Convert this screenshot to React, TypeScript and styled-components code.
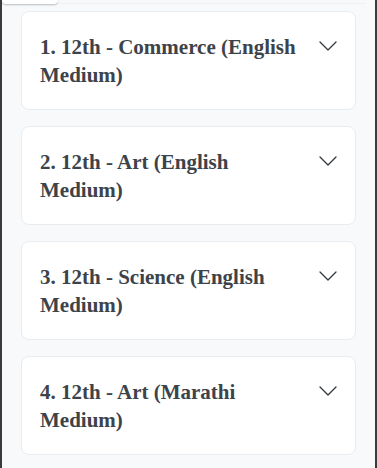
import styled, {createGlobalStyle} from "styled-components";

const GlobalStyle = createGlobalStyle`
    html, body {
        margin: 0;
        padding: 0;
        background: #f8f9fa;
    }
    * {
        box-sizing: border-box;
    }
`;

const Frame = styled.div`
    height: 468px;
    background-color: #f8f9fa;
    border-left: 2px solid #3b3b3b;
    border-right: 2px solid #3b3b3b;
    overflow: hidden;
`;

const TopStrip = styled.div`
    display: flex;
    align-items: flex-end;
    height: 4px;
`;

const Tab = styled.div`
    width: 56px;
    height: 4px;
    background: #ffffff;
    border-radius: 0 0 6px 6px;
    box-shadow: 0 1px 2px rgba(0, 0, 0, 0.25);
`;

const Rule = styled.div`
    flex: 1;
    height: 1px;
    margin-right: 9px;
    background: #eef0f2;
`;

const List = styled.div`
    display: flex;
    flex-direction: column;
    gap: 16px;
    padding: 7px 19px 0 19px;
`;

const Card = styled.div`
    display: flex;
    justify-content: space-between;
    align-items: flex-start;
    height: 99px;
    padding: 21px 18px 20px 18px;
    background: #ffffff;
    border: 1px solid #e9ecef;
    border-radius: 8px;
`;

const Title = styled.div`
    width: 270px;
    font-family: "Liberation Serif", "DejaVu Serif", serif;
    font-size: 21px;
    font-weight: 700;
    line-height: 28px;
    color: #3d434a;
`;

const Chevron = styled.svg`
    flex: none;
    margin-top: 8px;
    width: 18px;
    height: 10px;
`;

const ChevronIcon = () => (<Chevron viewBox={'0 0 18 10'} fill={'none'}>
    <polyline points={'1,1 9,9 17,1'} stroke={'#343a40'} strokeWidth={1.3}
              strokeLinecap={'round'} strokeLinejoin={'round'}/>
</Chevron>)

const courses = [
    '1. 12th - Commerce (English Medium)',
    '2. 12th - Art (English Medium)',
    '3. 12th - Science (English Medium)',
    '4. 12th - Art (Marathi Medium)',
]

export default function App() {
    return (<>
        <GlobalStyle/>
        <Frame>
            <TopStrip>
                <Tab/>
                <Rule/>
            </TopStrip>
            <List>
                {courses.map(c => (<Card key={c}>
                    <Title>{c}</Title>
                    <ChevronIcon/>
                </Card>))}
            </List>
        </Frame>
    </>)
}
